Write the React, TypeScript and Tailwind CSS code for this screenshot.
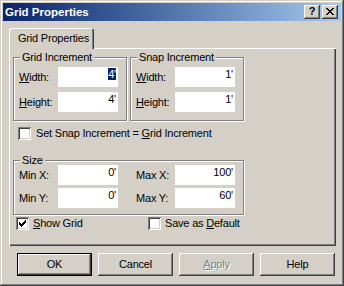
import React from "react";

const raised =
  "shadow-[inset_-1px_-1px_#404040,inset_1px_1px_#fff,inset_-2px_-2px_#808080,inset_2px_2px_#d4d0c8]";
const sunken =
  "shadow-[inset_1px_1px_#808080,inset_-1px_-1px_#fff,inset_2px_2px_#404040,inset_-2px_-2px_#d4d0c8]";

function CheckBox({ checked }: { checked?: boolean }) {
  return (
    <div className={`w-[13px] h-[13px] bg-white shrink-0 ${sunken}`}>
      {checked && (
        <svg width="13" height="13" viewBox="0 0 13 13" className="block">
          <rect x="3" y="5" width="1" height="3" fill="#000" />
          <rect x="4" y="6" width="1" height="3" fill="#000" />
          <rect x="5" y="7" width="1" height="3" fill="#000" />
          <rect x="6" y="6" width="1" height="3" fill="#000" />
          <rect x="7" y="5" width="1" height="3" fill="#000" />
          <rect x="8" y="4" width="1" height="3" fill="#000" />
          <rect x="9" y="3" width="1" height="3" fill="#000" />
        </svg>
      )}
    </div>
  );
}

function Field({ value, selected }: { value: string; selected?: boolean }) {
  return (
    <div className="w-[60px] h-[20px] bg-white text-right pr-[2px] pt-[1px] leading-[13px]">
      {selected ? <span className="bg-[#0a246a] text-white">{value}</span> : value}
    </div>
  );
}

function Row({ label, value, selected }: { label: React.ReactNode; value: string; selected?: boolean }) {
  return (
    <div className="flex items-center h-[20px]">
      <div className="w-[39px] leading-[13px]">{label}</div>
      <Field value={value} selected={selected} />
    </div>
  );
}

function Group({
  title,
  className,
  children,
}: {
  title: string;
  className: string;
  children: React.ReactNode;
}) {
  return (
    <div
      className={`relative border border-[#808080] shadow-[inset_1px_1px_#fff,1px_1px_#fff] ${className}`}
    >
      <div className="absolute top-[-7px] left-[6px] px-[2px] bg-[#d4d0c8] leading-[13px]">{title}</div>
      {children}
    </div>
  );
}

function Btn({
  children,
  def,
  disabled,
}: {
  children: React.ReactNode;
  def?: boolean;
  disabled?: boolean;
}) {
  const sh = def
    ? "shadow-[inset_0_0_0_1px_#000,inset_-2px_-2px_#404040,inset_2px_2px_#fff,inset_-3px_-3px_#808080]"
    : raised;
  return (
    <div
      className={`w-[75px] h-[23px] flex items-center justify-center leading-[13px] ${sh} ${
        disabled ? "text-[#808080] [text-shadow:1px_1px_0_#fff]" : ""
      }`}
    >
      {children}
    </div>
  );
}

export default function App() {
  return (
    <div className="w-[344px] h-[286px] bg-[#d4d0c8] p-[3px] flex flex-col text-[11px] tracking-[-0.2px] text-black font-['Liberation_Sans',Arial,sans-serif] shadow-[inset_-1px_-1px_#404040,inset_1px_1px_#d4d0c8,inset_-2px_-2px_#808080,inset_2px_2px_#fff] overflow-hidden">
      {/* Title bar */}
      <div className="h-[18px] shrink-0 flex items-center bg-gradient-to-r from-[#0a246a] to-[#a6caf0] pl-[2px]">
        <div className="text-white font-bold text-[11.5px] tracking-normal leading-[14px] flex-1">Grid Properties</div>
        <div className="flex gap-[2px] mr-[3px]">
          <div className={`w-[16px] h-[14px] bg-[#d4d0c8] flex items-center justify-center ${raised}`}>
            <span className="font-bold text-[11px] leading-[11px] mt-[-1px]">?</span>
          </div>
          <div className={`w-[16px] h-[14px] bg-[#d4d0c8] flex items-center justify-center ${raised}`}>
            <svg width="8" height="7" viewBox="0 0 8 7" className="block mt-[-1px]">
              <path
                d="M0 0h2v1H0zM6 0h2v1H6zM1 1h2v1H1zM5 1h2v1H5zM2 2h4v1H2zM3 3h2v1H3zM2 4h4v1H2zM1 5h2v1H1zM5 5h2v1H5zM0 6h2v1H0zM6 6h2v1H6z"
                fill="#000"
              />
            </svg>
          </div>
        </div>
      </div>

      {/* Tab */}
      <div className="ml-[6px] mt-[7px] w-[85px] h-[21px] shrink-0 relative z-10 -mb-[1px] bg-[#d4d0c8] rounded-t-[3px] shadow-[inset_1px_1px_#fff,inset_-1px_0_#404040,inset_-2px_0_#808080] pl-[9px] pt-[4px] leading-[13px]">
        Grid Properties
      </div>

      {/* Panel */}
      <div className="ml-[6px] w-[327px] h-[198px] shrink-0 pl-[4px] pt-[9px] flex flex-col shadow-[inset_1px_1px_#fff,inset_-1px_-1px_#404040,inset_-2px_-2px_#808080]">
        <div className="flex">
          <Group title="Grid Increment" className="w-[114px] h-[64px] pl-[5px] pt-[9px]">
            <div className="flex flex-col gap-[5px]">
              <Row
                label={
                  <>
                    <u>W</u>idth:
                  </>
                }
                value="4'"
                selected
              />
              <Row
                label={
                  <>
                    <u>H</u>eight:
                  </>
                }
                value="4'"
              />
            </div>
          </Group>
          <Group title="Snap Increment" className="ml-[3px] w-[114px] h-[64px] pl-[5px] pt-[9px]">
            <div className="flex flex-col gap-[5px]">
              <Row
                label={
                  <>
                    <u>W</u>idth:
                  </>
                }
                value="1'"
              />
              <Row
                label={
                  <>
                    <u>H</u>eight:
                  </>
                }
                value="1'"
              />
            </div>
          </Group>
        </div>

        <div className="flex items-center mt-[6px] ml-[5px] h-[13px]">
          <CheckBox />
          <span className="ml-[5px] leading-[13px]">
            Set Snap Increment = <u>G</u>rid Increment
          </span>
        </div>

        <Group title="Size" className="mt-[20px] w-[231px] h-[55px] pl-[5px] pt-[4px]">
          <div className="flex gap-[18px]">
            <div className="flex flex-col gap-[3px]">
              <Row label="Min X:" value="0'" />
              <Row label="Min Y:" value="0'" />
            </div>
            <div className="flex flex-col gap-[3px]">
              <Row label="Max X:" value="100'" />
              <Row label="Max Y:" value="60'" />
            </div>
          </div>
        </Group>

        <div className="flex items-center mt-[2px] ml-[3px] h-[13px]">
          <div className="w-[132px] flex items-center">
            <CheckBox checked />
            <span className="ml-[4px] leading-[13px]">
              <u>S</u>how Grid
            </span>
          </div>
          <div className="flex items-center">
            <CheckBox />
            <span className="ml-[4px] leading-[13px]">
              Save as <u>D</u>efault
            </span>
          </div>
        </div>
      </div>

      {/* Buttons */}
      <div className="flex gap-[6px] ml-[14px] mt-[7px]">
        <Btn def>OK</Btn>
        <Btn>Cancel</Btn>
        <Btn disabled>
          <span>
            <u>A</u>pply
          </span>
        </Btn>
        <Btn>Help</Btn>
      </div>
    </div>
  );
}
